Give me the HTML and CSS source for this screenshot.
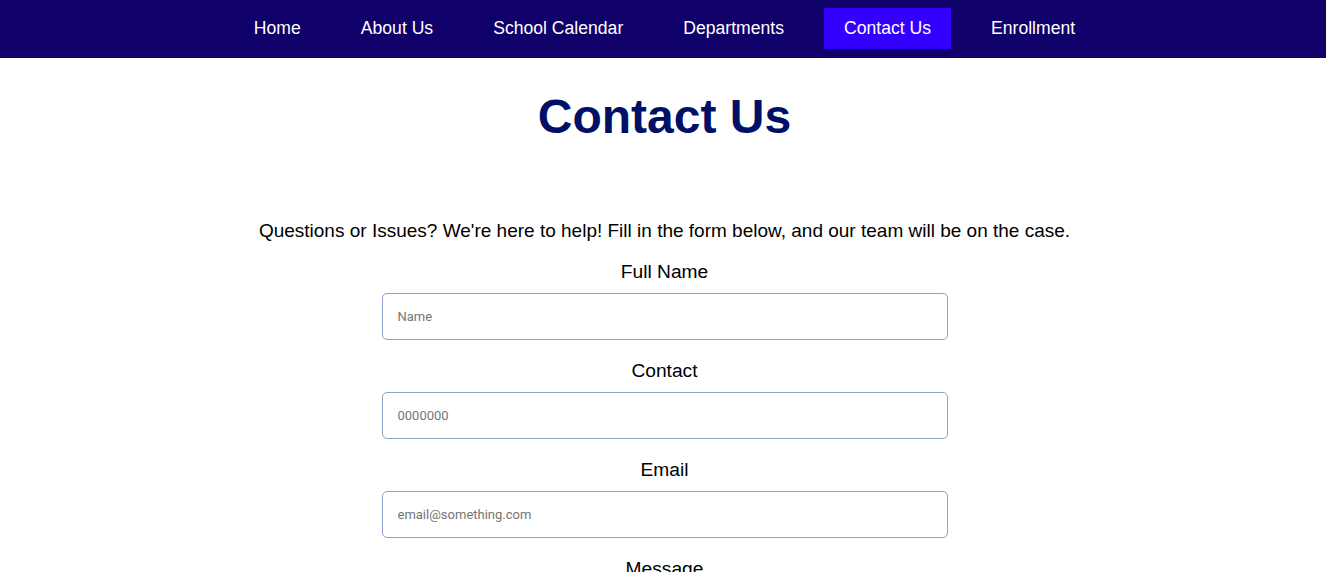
FILE: index.html
```html
<!DOCTYPE html>
<html lang="en">
<head>
<meta charset="utf-8">
<title>Contact Us</title>
<link rel="stylesheet" href="styles.css">
</head>
<body>
<nav class="navbar">
  <ul class="nav-list">
    <li><a class="nav-link" href="#">Home</a></li>
    <li><a class="nav-link" href="#">About Us</a></li>
    <li><a class="nav-link" href="#">School Calendar</a></li>
    <li><a class="nav-link" href="#">Departments</a></li>
    <li><a class="nav-link active" href="#">Contact Us</a></li>
    <li><a class="nav-link" href="#">Enrollment</a></li>
  </ul>
</nav>
<main class="content">
  <h1 class="title">Contact Us</h1>
  <p class="intro">Questions or Issues? We're here to help! Fill in the form below, and our team will be on the case.</p>
  <form class="form">
    <label class="label" for="name">Full Name</label>
    <input class="field" id="name" type="text" placeholder="Name">
    <label class="label" for="contact">Contact</label>
    <input class="field" id="contact" type="text" placeholder="0000000">
    <label class="label" for="email">Email</label>
    <input class="field" id="email" type="email" placeholder="email@something.com">
    <label class="label" for="msg">Message</label>
    <textarea class="field area" id="msg" placeholder="Message"></textarea>
  </form>
</main>
</body>
</html>
```
FILE: styles.css
```css
html, body {
  margin: 0;
  padding: 0;
}
body {
  font-family: "Liberation Sans", Arial, sans-serif;
  background: #ffffff;
  color: #000000;
  padding-left: 3px;
}
.navbar {
  background: #10006a;
  padding: 8px 0 9px;
  margin-left: -3px;
  padding-left: 3px;
}
.nav-list {
  list-style: none;
  margin: 0;
  padding: 0;
  display: flex;
  justify-content: center;
  gap: 20px;
}
.nav-link {
  display: block;
  padding: 10px 20px;
  font-size: 17.6px;
  line-height: 21px;
  color: #ffffff;
  text-decoration: none;
}
.nav-link.active {
  background: #3300ff;
}
.content {
  display: flex;
  flex-direction: column;
  align-items: center;
}
.title {
  margin: 31px 0 0;
  font-size: 48px;
  line-height: 55px;
  font-weight: bold;
  color: #001066;
}
.intro {
  margin: 76px 0 0;
  font-size: 19px;
  line-height: 22px;
}
.form {
  display: flex;
  flex-direction: column;
  align-items: center;
  margin-top: 19px;
}
.label {
  font-size: 19.2px;
  line-height: 22px;
  margin-bottom: 10px;
}
.field {
  box-sizing: border-box;
  width: 566px;
  height: 47px;
  padding: 0 15px;
  border: 1px solid #8da2c9;
  border-radius: 5px;
  font-family: Roboto, "Liberation Sans", sans-serif;
  font-size: 13px;
  margin-bottom: 20px;
  color: #333;
}
.field::placeholder {
  color: #757575;
}
.area {
  height: 120px;
  padding-top: 15px;
  resize: none;
}
```
